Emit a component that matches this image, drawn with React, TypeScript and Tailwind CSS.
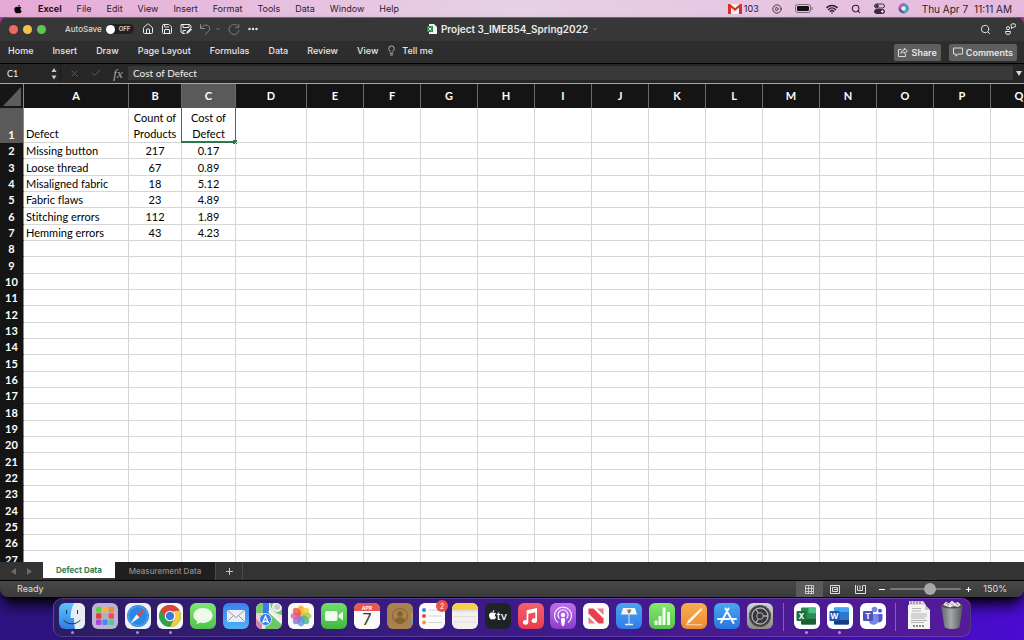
import type { ReactNode } from "react";
import {
  Check,
  ChevronDown,
  CirclePlay,
  Ellipsis,
  House,
  Lightbulb,
  Save,
  Search,
  Wifi,
  X,
} from "lucide-react";
import { FaApple } from "react-icons/fa";

const menus = ["File", "Edit", "View", "Insert", "Format", "Tools", "Data", "Window", "Help"];
const ribbonTabs = ["Home", "Insert", "Draw", "Page Layout", "Formulas", "Data", "Review", "View"];

const columns = [
  { name: "A", width: "w-[105px]" },
  { name: "B", width: "w-[53px]" },
  { name: "C", width: "w-[54px]" },
  { name: "D", width: "w-[71px]" },
  ..."EFGHIJKLMNOPQ".split("").map((name) => ({ name, width: "w-[57px]" })),
];

const data: Record<number, string[]> = {
  1: ["Defect", "Count of Products", "Cost of Defect"],
  2: ["Missing button", "217", "0.17"],
  3: ["Loose thread", "67", "0.89"],
  4: ["Misaligned fabric", "18", "5.12"],
  5: ["Fabric flaws", "23", "4.89"],
  6: ["Stitching errors", "112", "1.89"],
  7: ["Hemming errors", "43", "4.23"],
};

function MenuBar() {
  return (
    <header className="flex h-[17px] shrink-0 items-center justify-between bg-linear-to-r from-[#e6a9d6] via-[#e6d2e6] to-[#e6b9dc] pr-3 pl-[13px] text-[9px] leading-none text-[#2b1d2b]">
      <nav className="flex items-center gap-[15px]">
        <FaApple className="size-[10px] text-black" />
        <span className="font-bold text-[#1c101c]">Excel</span>
        {menus.map((m) => (
          <button key={m}>{m}</button>
        ))}
      </nav>
      <div className="flex items-center gap-[13px]">
        <span className="flex items-center gap-[2px]">
          <svg viewBox="0 0 14 11" className="h-[11px] w-[14px]">
            <path d="M0 1h14v10H0z" fill="#f4f0f4" />
            <path d="M0 1v10h3V4.5L7 8l4-3.5V11h3V1h-2L7 5.3 2 1z" fill="#d93025" />
          </svg>
          103
        </span>
        <CirclePlay className="size-[10px]" />
        <svg viewBox="0 0 18 9" className="h-[9px] w-[18px]">
          <rect x=".5" y=".5" width="15" height="8" rx="2" fill="none" stroke="#7a6878" />
          <rect x="2" y="2" width="12" height="5" rx="1" fill="#181018" />
          <path d="M17 3v3" stroke="#7a6878" />
        </svg>
        <Wifi className="size-[12px]" strokeWidth={3} />
        <Search className="size-[10px]" strokeWidth={2.5} />
        <svg viewBox="0 0 11 11" className="size-[11px]" fill="none" stroke="#3a2a3a">
          <rect x=".5" y="1" width="10" height="4" rx="2" />
          <circle cx="3" cy="3" r="1.3" fill="#3a2a3a" />
          <rect x=".5" y="6.5" width="10" height="4" rx="2" fill="#3a2a3a" />
          <circle cx="8.3" cy="8.5" r=".8" fill="#fff" stroke="#fff" />
        </svg>
        <svg viewBox="0 0 11 11" className="size-[11px]">
          <circle cx="5.5" cy="5.5" r="5" fill="#5a5a9a" />
          <path d="M5.5.5a5 5 0 0 1 5 5h-5z" fill="#3d9be0" />
          <path d="M.5 5.5a5 5 0 0 1 5-5v5z" fill="#c65a9c" />
          <path d="M5.5 10.5a5 5 0 0 0 5-5h-5z" fill="#37b6a8" />
          <circle cx="5.5" cy="5.5" r="2.2" fill="#e6effa" />
        </svg>
        <span className="flex gap-[6px] text-[10px]">
          <span>Thu Apr 7</span>
          <span>11:11 AM</span>
        </span>
      </div>
    </header>
  );
}

function TitleBar() {
  return (
    <div className="flex h-6 shrink-0 items-center border-t border-[#6a6a6a] bg-[#373737] pr-2 pb-px pl-[9px] text-[#ececec]">
      <div className="flex flex-1 items-center">
        <div className="flex gap-[5px]">
          <button aria-label="Close" className="size-[9px] rounded-full bg-[#ed6a5e]" />
          <button aria-label="Minimize" className="size-[9px] rounded-full bg-[#f5bf4f]" />
          <button aria-label="Zoom" className="size-[9px] rounded-full bg-[#61c554]" />
        </div>
        <label className="ml-[19px] flex items-center gap-1 text-[8px] leading-none font-medium text-[#d8d8d8]">
          AutoSave
          <span className="flex h-[10px] w-7 items-center gap-1 rounded-full bg-[#202020]">
            <input type="checkbox" className="size-[9px] appearance-none rounded-full bg-white" />
            <span className="text-[6px] font-semibold">OFF</span>
          </span>
        </label>
        <div className="ml-2 flex items-center gap-[7px]">
          <button aria-label="Home">
            <House className="size-3" />
          </button>
          <button aria-label="Save">
            <Save className="size-3" />
          </button>
          <button aria-label="Save a copy">
            <svg viewBox="0 0 12 12" className="size-3" fill="none" stroke="currentColor">
              <path d="M5 10.5H2.5L1 9V1.5h8.5L11 3v2M3 1.500v3h6v-3M3 10V7.5h3" />
              <path d="M6 11l1-2.500L10.5 5 12 6.500 8.5 10z" fill="currentColor" stroke="none" />
            </svg>
          </button>
          <button aria-label="Undo" className="flex items-center gap-1 text-[#8a8a8a]">
            <svg viewBox="0 0 12 12" className="size-3" fill="none" stroke="currentColor">
              <path d="M1.5 1v4.500H6M1.800 5.200C4 2 7.500 1.200 9.500 3.200s1.200 4-.8 5.800L6 11.500" />
            </svg>
            <ChevronDown className="size-[6px]" strokeWidth={3} />
          </button>
          <button aria-label="Redo" className="text-[#7a7a7a]">
            <svg viewBox="0 0 12 12" className="size-3" fill="none" stroke="currentColor">
              <path d="M10.800 1v3.500H7.300M10.500 4.200A5 5 0 1 0 11 7" />
            </svg>
          </button>
          <button aria-label="More">
            <Ellipsis className="size-3" strokeWidth={3} />
          </button>
        </div>
      </div>
      <h1 className="flex items-center gap-1 text-[10px] leading-none font-semibold">
        <svg viewBox="0 0 10 10" className="size-[10px]">
          <path d="M2 0h5l3 3v7H2z" fill="#f4f4f4" />
          <rect x="0" y="2" width="6" height="6" fill="#2a8a50" />
          <path d="M1.500 3.500l3 3M4.500 3.500l-3 3" stroke="#dff0e4" />
        </svg>
        Project 3_IME854_Spring2022
        <ChevronDown className="size-[6px] text-[#8a8a8a]" strokeWidth={3} />
      </h1>
      <div className="flex flex-1 items-center justify-end gap-[13px]">
        <button aria-label="Search">
          <Search className="size-[11px]" />
        </button>
        <button aria-label="Collaborate">
          <svg viewBox="0 0 12 12" className="size-3" fill="none" stroke="currentColor">
            <circle cx="4" cy="5.200" r="1.600" />
            <path d="M1.500 8.500h5v.8a2.500 2.200 0 0 1-5 0z" />
            <path d="M8.500.8h1.500a1.700 1.700 0 0 1 0 3.400H9.300L7.500 5.500V3.800A1.700 1.700 0 0 1 8.500.8z" />
          </svg>
        </button>
      </div>
    </div>
  );
}

function Ribbon() {
  return (
    <div className="flex h-[23px] shrink-0 items-center justify-between border-b border-black bg-[#2d2d2d] pr-[7px] pl-2 text-[9px] leading-none font-medium text-[#e6e6e6]">
      <nav className="flex items-center gap-[19px] pb-[3px]">
        {ribbonTabs.map((t) => (
          <button key={t}>{t}</button>
        ))}
        <button className="-ml-[11px] flex items-center gap-[5px]">
          <Lightbulb className="size-[11px] text-[#c4c4c4]" />
          Tell me
        </button>
      </nav>
      <div className="flex gap-2 font-semibold">
        <button className="flex h-[17px] items-center gap-1 rounded-[2px] bg-[#5e5e5e] px-1">
          <svg viewBox="0 0 10 10" className="size-[10px]" fill="none" stroke="currentColor" strokeWidth=".9">
            <path d="M3.500 2.500h-3v7h7V7" />
            <path d="M3 6.500C3.200 4 4.500 3 6.300 3V1.200L9.500 4 6.300 6.600V5C5 5 4 5.300 3 6.500z" />
          </svg>
          Share
        </button>
        <button className="flex h-[17px] items-center gap-[3px] rounded-[2px] bg-[#5e5e5e] px-1">
          <svg viewBox="0 0 10 10" className="size-[10px]" fill="none" stroke="currentColor" strokeWidth=".9">
            <path d="M.5 1h9v6H5L3 9.200V7H.5z" />
          </svg>
          Comments
        </button>
      </div>
    </div>
  );
}

function FormulaBar() {
  return (
    <div className="flex h-5 shrink-0 items-center border-b border-[#a8a8a8] bg-[#262626] pb-px font-['Lato',sans-serif] text-[10px] leading-none text-[#f0f0f0]">
      <input
        aria-label="Name box"
        defaultValue="C1"
        className="h-4 w-[51px] bg-transparent pl-[7px] text-[9px] outline-none"
      />
      <svg viewBox="0 0 6 13" className="h-[13px] w-[6px] shrink-0" fill="#c8c8c8">
        <path d="M3 1l2.500 4h-5zM3 12.500L.5 8.500h5z" />
      </svg>
      <div className="ml-[3px] flex h-full shrink-0 items-center border-l border-[#1a1a1a] text-[#5c5c5c]">
        <button aria-label="Cancel" className="ml-2">
          <X className="size-[11px]" />
        </button>
        <button aria-label="Enter" className="ml-[10px]">
          <Check className="size-[12px]" />
        </button>
        <button
          aria-label="Insert function"
          className="ml-[10px] w-[12px] font-['Liberation_Serif',serif] text-[13px] text-[#a8a8a8] italic"
        >
          fx
        </button>
      </div>
      <input
        aria-label="Formula"
        defaultValue="Cost of Defect"
        className="ml-1 h-[14px] min-w-0 flex-1 bg-[#383838] pl-[5px] outline-none"
      />
      <button aria-label="Expand formula bar" className="flex w-[11px] justify-center">
        <svg viewBox="0 0 6 5" className="h-[5px] w-[6px]" fill="#d8d8d8">
          <path d="M0 0h6L3 5z" />
        </svg>
      </button>
    </div>
  );
}

// Every third row takes the extra pixel of the 150% zoom.
function rowHeight(row: number) {
  if (row === 1) return "h-[35px]";
  return row % 3 === 0 ? "h-[17px]" : "h-[16px]";
}

function Sheet() {
  return (
    <main className="min-h-0 flex-1 overflow-hidden bg-white font-['Lato',sans-serif] text-[11px] leading-[16px] text-black [font-variant-ligatures:none]">
      <table className="w-[1047px] table-fixed border-separate border-spacing-0">
        <colgroup>
          <col className="w-6" />
          {columns.map((c) => (
            <col key={c.name} className={c.width} />
          ))}
        </colgroup>
        <thead>
          <tr className="h-6 text-white">
            <th className="border-r border-[#8a8a8a] bg-[#161616] p-0">
              <svg viewBox="0 0 23 24" className="block h-6 w-[23px]">
                <path d="M21 3v19H3z" fill="#5c5c5c" />
              </svg>
            </th>
            {columns.map((c) => (
              <th
                key={c.name}
                scope="col"
                className={`border-r border-[#6a6a6a] p-0 font-bold ${
                  c.name === "C" ? "bg-[#5a5a5a]" : "bg-[#141414]"
                }`}
              >
                {c.name}
              </th>
            ))}
          </tr>
        </thead>
        <tbody>
          {Array.from({ length: 27 }, (_, i) => i + 1).map((row) => (
            <tr key={row} className={rowHeight(row)}>
              <th
                scope="row"
                className={`border-r border-b border-r-[#8a8a8a] p-0 align-bottom leading-[15px] font-bold text-white ${
                  row === 1 ? "border-b-[#5a5a5a] bg-[#5a5a5a]" : "border-b-[#141414] bg-[#141414]"
                }`}
              >
                {row}
              </th>
              {columns.map((c, i) => (
                <td
                  key={c.name}
                  className={`relative border-r border-b border-[#d6d6d6] p-0 align-bottom ${
                    row === 1 ? "leading-[16px]" : "leading-[15px]"
                  } ${i === 0 ? "pl-[2px] text-left" : "text-center"}`}
                >
                  {data[row]?.[i]}
                  {row === 1 && c.name === "C" && (
                    <span className="absolute -inset-px border border-b-2 border-[#2b7a4b]">
                      <span className="absolute -right-[2px] -bottom-[3px] size-1 bg-[#2b7a4b]" />
                    </span>
                  )}
                </td>
              ))}
            </tr>
          ))}
        </tbody>
      </table>
    </main>
  );
}

function SheetTabs() {
  return (
    <div className="flex h-[19px] shrink-0 items-start border-b border-black bg-[#333] text-[8px] leading-none text-[#8f8f8f]">
      <div className="flex h-[18px] w-[43px] items-center justify-center gap-[11px]">
        <button aria-label="Previous sheet">
          <svg viewBox="0 0 5 7" className="h-[7px] w-[5px]" fill="#6a6a6a">
            <path d="M5 0v7L0 3.500z" />
          </svg>
        </button>
        <button aria-label="Next sheet">
          <svg viewBox="0 0 5 7" className="h-[7px] w-[5px]" fill="#6a6a6a">
            <path d="M0 0v7l5-3.500z" />
          </svg>
        </button>
      </div>
      <button className="h-4 w-[72px] bg-white font-bold text-[#2f7d4f]">Defect Data</button>
      <button className="h-[18px] w-[101px] border-r border-[#4a4a4a] bg-[#1f1f1f] font-medium">
        Measurement Data
      </button>
      <button
        aria-label="Add sheet"
        className="flex h-[18px] w-[27px] items-center justify-center border-r border-[#4a4a4a]"
      >
        <svg viewBox="0 0 7 7" className="size-[7px]" stroke="#c8c8c8">
          <path d="M3.500 0v7M0 3.500h7" />
        </svg>
      </button>
    </div>
  );
}

function StatusBar() {
  return (
    <footer className="flex h-4 shrink-0 items-center justify-between bg-linear-to-b from-[#484848] to-[#3a3a3a] px-[17px] text-[9px] leading-none text-[#dedede]">
      <span className="pb-px">Ready</span>
      <div className="flex h-full items-center">
        <button aria-label="Normal view" className="flex h-full w-[27px] items-center justify-center bg-[#5a5a5a]">
          <svg viewBox="0 0 9 9" className="size-[9px]" fill="none" stroke="currentColor">
            <path d="M.5.5h8v8h-8zM3.500.5v8M6.500.5v8M.5 3.500h8M.5 6.500h8" strokeWidth=".8" />
          </svg>
        </button>
        <button aria-label="Page layout view" className="flex w-6 items-center justify-center">
          <svg viewBox="0 0 10 9" className="h-[9px] w-[10px]" fill="none" stroke="currentColor">
            <path d="M.5.5h9v8h-9zM2.500 2.500h5v4h-5zM4 4.500h3" />
          </svg>
        </button>
        <button aria-label="Page break view" className="flex w-[27px] items-center justify-center">
          <svg viewBox="0 0 11 9" className="h-[9px] w-[11px]" fill="none" stroke="currentColor">
            <path d="M.5 0v8.500h10V.5H8M2.500.5v5h5V.5M5 .5v4" />
          </svg>
        </button>
        <button aria-label="Zoom out" className="ml-[5px]">
          <svg viewBox="0 0 6 6" className="size-[6px]" stroke="#fff">
            <path d="M0 3.500h6" />
          </svg>
        </button>
        <input
          type="range"
          aria-label="Zoom"
          min={0}
          max={100}
          defaultValue={57}
          className="mx-[5px] h-3 w-[71px] appearance-none bg-transparent [&::-webkit-slider-runnable-track]:h-[2px] [&::-webkit-slider-runnable-track]:rounded-full [&::-webkit-slider-runnable-track]:bg-[#7a7a7a] [&::-webkit-slider-thumb]:-mt-[5px] [&::-webkit-slider-thumb]:size-3 [&::-webkit-slider-thumb]:appearance-none [&::-webkit-slider-thumb]:rounded-full [&::-webkit-slider-thumb]:bg-[#a8a8a8]"
        />
        <button aria-label="Zoom in">
          <svg viewBox="0 0 5 5" className="size-[5px]" stroke="#fff">
            <path d="M2.500 0v5M0 2.500h5" />
          </svg>
        </button>
        <span className="ml-3 pb-px">150%</span>
      </div>
    </footer>
  );
}

type DockItem = { name: string; art: ReactNode; bg?: string; open?: boolean; badge?: string };

const petals = ["#f5a623", "#f7d038", "#a9cf46", "#55b08a", "#4f9fe0", "#8a78cf", "#d067a8", "#ee5a4a"];
const padColors = ["#5fd04a", "#f5b83a", "#f09030", "#e0403a", "#b0b0b8", "#f04a5a", "#a04ae0", "#4a8af0", "#50c8a0"];

const apps: DockItem[] = [
  {
    name: "Finder",
    open: true,
    bg: "bg-linear-to-b from-[#5ac4fa] to-[#2f7ee6]",
    art: (
      <>
        <path d="M15 0C12.500 5 11.500 10 11.500 15h3.500c0 4 .3 7.500 1 11h10V0z" fill="#e8ecf4" />
        <path d="M7.500 7.500v3M18.500 7.500v3M5 17.500c4.500 4.500 11.500 4.500 16 0" fill="none" stroke="#1c2c48" strokeLinecap="round" />
      </>
    ),
  },
  {
    name: "Launchpad",
    bg: "bg-[#bdb3cc]",
    art: padColors.map((c, i) => (
      <rect key={c} x={4 + (i % 3) * 6.3} y={4 + Math.floor(i / 3) * 6.3} width="5.400" height="5.400" rx="1.200" fill={c} />
    )),
  },
  {
    name: "Safari",
    open: true,
    bg: "bg-[#eef0f3]",
    art: (
      <>
        <circle cx="13" cy="13" r="11" fill="#2b86e4" />
        <circle cx="13" cy="13" r="9.500" fill="none" stroke="#8cc4f6" strokeWidth="1.500" strokeDasharray=".6 1.200" />
        <path d="M21 5L14.500 14.500l-3-3z" fill="#e8453c" />
        <path d="M5 21l6.500-9.500 3 3z" fill="#f2f5f8" />
      </>
    ),
  },
  {
    name: "Chrome",
    open: true,
    bg: "bg-[#f6f6f6]",
    art: (
      <>
        <circle cx="13" cy="13" r="11" fill="#2fa24f" />
        <path d="M3.500 7.500A11 11 0 0 1 22.500 7.500L13 8.500 9 15.500z" fill="#dc4437" />
        <path d="M22.600 7.800A11 11 0 0 1 13 24L17.500 15.500 16.500 8z" fill="#f7cb42" />
        <circle cx="13" cy="13" r="5.300" fill="#fff" />
        <circle cx="13" cy="13" r="4.200" fill="#3b78e0" />
      </>
    ),
  },
  {
    name: "Messages",
    bg: "bg-linear-to-b from-[#7fe875] to-[#4fc24a]",
    art: <path d="M13 5c5.500 0 9.500 3.300 9.500 7.600s-4 7.400-9.500 7.400c-1 0-2-.1-3-.4-1 .9-2.400 1.400-4 1.400.9-.8 1.300-1.600 1.300-2.600C5 17 3.500 15 3.500 12.600 3.500 8.300 7.500 5 13 5z" fill="#eefbec" />,
  },
  {
    name: "Mail",
    bg: "bg-linear-to-b from-[#3a80ee] to-[#52b0f4]",
    art: (
      <>
        <rect x="4" y="7" width="18" height="12" rx="1.500" fill="#eceef2" />
        <path d="M4.500 7.500l8.500 7 8.500-7M4.500 18.500l6-6M21.500 18.500l-6-6" fill="none" stroke="#8c949e" strokeWidth=".9" />
      </>
    ),
  },
  {
    name: "Maps",
    bg: "bg-[#e4ecdc]",
    art: (
      <>
        <path d="M14 0h12v12C20 11 15 7 14 0zM13 8l13 12v6H9z" fill="#6cc768" />
        <path d="M0 0h7v10H0z" fill="#78c874" />
        <path d="M0 10h5v16H0z" fill="#f0c8d4" />
        <path d="M0 16l6 5v5H0z" fill="#d880b0" />
        <path d="M7 0h6v14H7z" fill="#3b7ae8" />
        <path d="M13 8l13 12" stroke="#f2f4f0" strokeWidth="2.500" />
        <circle cx="21" cy="4" r="4" fill="#c8ccc8" stroke="#f2f2f2" strokeWidth="2" />
        <circle cx="9.500" cy="16.500" r="6" fill="#2f80ee" stroke="#d8e8fa" />
        <path d="M9.500 13l2.700 6.500-2.700-1.500-2.700 1.500z" fill="none" stroke="#fff" strokeWidth="1.200" />
      </>
    ),
  },
  {
    name: "Photos",
    bg: "bg-[#fafafa]",
    art: petals.map((c, i) => (
      <ellipse key={c} cx="13" cy="7.500" rx="3.600" ry="5" fill={c} opacity=".82" transform={`rotate(${i * 45} 13 13)`} />
    )),
  },
  {
    name: "FaceTime",
    bg: "bg-linear-to-b from-[#70e06a] to-[#40b840]",
    art: <path d="M6 8h8.500a2 2 0 0 1 2 2v6a2 2 0 0 1-2 2H6a2 2 0 0 1-2-2v-6a2 2 0 0 1 2-2zM17.500 12L22 8.500v9L17.500 14z" fill="#f0fcee" />,
  },
  {
    name: "Calendar",
    bg: "bg-[#fafafa]",
    art: (
      <>
        <path d="M0 0h26v8H0z" fill="#e8554e" />
        <text x="13" y="6.500" fontSize="5" fontWeight="700" fill="#fff" textAnchor="middle">APR</text>
        <text x="13" y="22" fontSize="16" fill="#333" textAnchor="middle">7</text>
      </>
    ),
  },
  {
    name: "Contacts",
    bg: "bg-[#a8824f]",
    art: (
      <>
        <path d="M24.500 4v6h1.500V4z" fill="#888" />
        <path d="M24.500 10v5h1.500v-5z" fill="#e89040" />
        <path d="M24.500 15v6h1.500v-6z" fill="#55a8d0" />
        <circle cx="13" cy="13" r="7.500" fill="none" stroke="#84632f" />
        <circle cx="13" cy="11" r="2.800" fill="#84632f" />
        <path d="M7.500 18c1-5 10-5 11 0a7.500 7.500 0 0 1-11 0z" fill="#84632f" />
      </>
    ),
  },
  {
    name: "Reminders",
    bg: "bg-[#fafafa]",
    badge: "2",
    art: (
      <>
        <path d="M9.500 7H23M9.500 13H23M9.500 19.500H23" stroke="#c9c9cc" strokeWidth=".8" />
        <circle cx="5" cy="7" r="2" fill="#3b82e8" />
        <circle cx="5" cy="13" r="2" fill="#e84a40" />
        <circle cx="5" cy="19.500" r="2" fill="#f09a38" />
      </>
    ),
  },
  {
    name: "Notes",
    bg: "bg-[#f3f1ee]",
    art: (
      <>
        <path d="M0 0h26v7H0z" fill="#f8cf48" />
        <path d="M0 8h26" stroke="#a8a49c" strokeWidth=".7" strokeDasharray="1 .8" />
        <path d="M2 13.500h22M2 19h22" stroke="#d8d5d0" strokeWidth=".7" />
      </>
    ),
  },
  {
    name: "TV",
    bg: "bg-[#1c2428]",
    art: (
      <>
        <path d="M9.500 9.800c-.9-.5-1.600 0-2 0s-1.100-.4-1.900-.1C4 10.200 3.600 12.300 4.500 14.500c1 2.200 1.700 2.200 2.500 1.800.6-.2.900-.2 1.500 0 1.100.5 2-.7 2.600-2.200-1.600-1-1.500-2.800 0-3.600-.4-.5-1-.7-1.600-.7zM7.500 9.300c0-1.200.8-2 1.800-2.200.1 1.200-.7 2.200-1.800 2.200z" fill="#fff" />
        <text x="17" y="16.500" fontSize="11" fontWeight="500" fill="#fff" textAnchor="middle">tv</text>
      </>
    ),
  },
  {
    name: "Music",
    bg: "bg-linear-to-b from-[#f4606e] to-[#e83a4c]",
    art: (
      <path d="M19 5v12.500a2.700 2.300 0 1 1-1.700-2V9.300l-7 1.500v8.400a2.700 2.300 0 1 1-1.700-2V7.300z" fill="#fff" />
    ),
  },
  {
    name: "Podcasts",
    bg: "bg-linear-to-b from-[#c070ec] to-[#8a3cc8]",
    art: (
      <>
        <path d="M8 19.500a8.500 8.500 0 1 1 10 0M9.500 15.500a5 5 0 1 1 7 0" fill="none" stroke="#f4e8fc" strokeWidth="1.300" />
        <circle cx="13" cy="12" r="2.200" fill="#fff" />
        <path d="M10.800 16c0-1.500 4.400-1.500 4.400 0l-.8 6c-.3 1.300-2.500 1.300-2.800 0z" fill="#fff" />
      </>
    ),
  },
  {
    name: "News",
    bg: "bg-[#fafafa]",
    art: (
      <>
        <path d="M5.500 5.500h5l10 10v5h-5l-10-10z" fill="#e8404e" />
        <path d="M14 5.500h6.500V12zM5.500 14v6.500H12z" fill="#f07a84" />
      </>
    ),
  },
  {
    name: "Keynote",
    bg: "bg-linear-to-b from-[#4aa4f2] to-[#2f7ee8]",
    art: (
      <>
        <path d="M7 5h12l2 6.500H5z" fill="#f4f6f8" />
        <circle cx="12" cy="7.500" r="1.300" fill="#e8a030" />
        <circle cx="14" cy="7.500" r="1.300" fill="#48a860" />
        <circle cx="13" cy="9" r="1.200" fill="#d8453c" />
        <path d="M12.500 11.500h1V21h-1z" fill="#e0e8f0" />
        <path d="M9 21.500h8" stroke="#e8eef4" strokeWidth="1.300" />
      </>
    ),
  },
  {
    name: "Numbers",
    bg: "bg-linear-to-b from-[#86e86e] to-[#52c44a]",
    art: <path d="M5.500 17.500h3V22h-3zM9.500 13h3v9h-3zM13.500 4.500h3V22h-3zM18 9h3v13h-3z" fill="#f2fcf0" />,
  },
  {
    name: "Pages",
    bg: "bg-linear-to-b from-[#f6ae4e] to-[#ee8a30]",
    art: (
      <>
        <path d="M20 5l1.500 1.500L9 19.500l-3.500 1.700L7 17.500z" fill="#f8f4ee" />
        <path d="M5 21.800h16" stroke="#fbe0bc" />
      </>
    ),
  },
  {
    name: "App Store",
    bg: "bg-linear-to-b from-[#48a8f0] to-[#2b74de]",
    art: (
      <path d="M14.500 5.500L7 19.500M11.500 5.500L15 12l4.500 8M4 16h11M18.500 16H22" fill="none" stroke="#f4faff" strokeWidth="2" strokeLinecap="round" />
    ),
  },
  {
    name: "System Preferences",
    bg: "bg-linear-to-b from-[#d0d6d8] to-[#8c8a84]",
    art: (
      <>
        <circle cx="13" cy="13" r="11" fill="#38383a" />
        <circle cx="13" cy="13" r="10.300" fill="none" stroke="#88888a" strokeWidth=".9" strokeDasharray=".8 .8" />
        <circle cx="13" cy="13" r="8" fill="none" stroke="#b0b0b2" strokeWidth="1.300" />
        <circle cx="13" cy="13" r="3.300" fill="none" stroke="#b0b0b2" />
        <path d="M16.300 13H21M11.300 10L8.800 6.200M11.300 16l-2.500 3.800" stroke="#b0b0b2" strokeWidth="1.300" />
      </>
    ),
  },
];

const office: DockItem[] = [
  {
    name: "Excel",
    open: true,
    bg: "bg-white",
    art: (
      <>
        <rect x="7" y="4.500" width="15" height="17" rx="1" fill="#2a8a50" />
        <path d="M14.500 4.500H21a1 1 0 0 1 1 1v4.800h-7.500z" fill="#4cc088" />
        <path d="M7 16h15v4.500a1 1 0 0 1-1 1H8a1 1 0 0 1-1-1z" fill="#1c5c36" />
        <rect x="2.500" y="8" width="10" height="10" rx="1" fill="#1b7040" />
        <text x="7.500" y="15.700" fontSize="8" fontWeight="700" fill="#fff" textAnchor="middle">X</text>
      </>
    ),
  },
  {
    name: "Word",
    open: true,
    bg: "bg-white",
    art: (
      <>
        <rect x="7" y="4.500" width="15" height="17" rx="1" fill="#2b78d0" />
        <path d="M7 5.500a1 1 0 0 1 1-1h13a1 1 0 0 1 1 1v3.500H7z" fill="#48a4ee" />
        <path d="M7 17h15v3.500a1 1 0 0 1-1 1H8a1 1 0 0 1-1-1z" fill="#183e80" />
        <rect x="2.500" y="8" width="10" height="10" rx="1" fill="#1c56b0" />
        <text x="7.500" y="15.700" fontSize="8" fontWeight="700" fill="#fff" textAnchor="middle">W</text>
      </>
    ),
  },
  {
    name: "Teams",
    bg: "bg-white",
    art: (
      <>
        <circle cx="14.500" cy="6.500" r="2.800" fill="#7b83eb" />
        <circle cx="20" cy="7.800" r="2" fill="#5059c9" />
        <path d="M16 11h6.500v5a3.500 3.500 0 0 1-5 3z" fill="#5059c9" />
        <path d="M9 11h9.500v6a5 5 0 0 1-9.500 2z" fill="#7b83eb" />
        <rect x="3" y="8" width="10" height="10" rx="1" fill="#4b53bc" />
        <text x="8" y="15.700" fontSize="8" fontWeight="700" fill="#fff" textAnchor="middle">T</text>
      </>
    ),
  },
];

function DockIcon({ item }: { item: DockItem }) {
  return (
    <button aria-label={item.name} className="relative flex flex-col items-center gap-[2px]">
      <span className={`block size-[26px] overflow-hidden rounded-[6px] ${item.bg}`}>
        <svg viewBox="0 0 26 26" className="block size-[26px]">
          {item.art}
        </svg>
      </span>
      <span className={`size-[3px] rounded-full ${item.open ? "bg-[#b48ae8]" : ""}`} />
      {item.badge && (
        <span className="absolute -top-[3px] -right-[3px] flex size-3 items-center justify-center rounded-full bg-[#ec5045] text-[7px] leading-none text-white">
          {item.badge}
        </span>
      )}
    </button>
  );
}

function Dock() {
  return (
    <div className="mx-auto mt-px mb-[3px] flex h-[39px] w-full max-w-[918px] shrink-0 items-start justify-between rounded-[9px] border border-white/15 bg-linear-to-r from-[#2c1c62] via-[#3c1a88] to-[#541a9a] px-[5px] pt-1">
      <div className="flex w-[714px] justify-between">
        {apps.map((a) => (
          <DockIcon key={a.name} item={a} />
        ))}
      </div>
      <div className="h-[28px] w-px bg-white/30" />
      <div className="flex w-[92px] justify-between">
        {office.map((a) => (
          <DockIcon key={a.name} item={a} />
        ))}
      </div>
      <div className="h-[28px] w-px bg-white/30" />
      <div className="flex gap-[7px]">
        <button aria-label="Documents">
          <svg viewBox="0 0 26 32" className="-mt-[3px] block h-8 w-[26px]">
            <path d="M3 1h14l3 4v10H3z" fill="#d8d8d8" />
            <path d="M5 1v3M8 1v3M11 1v3M14 1v3" stroke="#777" />
            <path d="M2 5h17l5 5v19H2z" fill="#f4f4f4" />
            <path d="M19 5v5h5z" fill="#c4c4c4" />
            <path d="M6 8.500h9M6 11h9M5 14h16M5 16h16M5 18h14M5 20.500h16M5 22.500h13" stroke="#a4a4a4" strokeWidth=".8" />
            <path d="M7 26h12" stroke="#888" strokeWidth="2" strokeDasharray="2 1" />
          </svg>
        </button>
        <button aria-label="Trash">
          <svg viewBox="0 0 26 32" className="-mt-[3px] block h-8 w-[26px]">
            <defs>
              <linearGradient id="bin" x1="0" x2="1">
                <stop offset="0" stopColor="#606468" />
                <stop offset=".45" stopColor="#a4a8aa" />
                <stop offset="1" stopColor="#505458" />
              </linearGradient>
            </defs>
            <path d="M2 5h22l-3.500 22c-1.500 2.500-13.500 2.500-15 0z" fill="url(#bin)" />
            <ellipse cx="13" cy="5.500" rx="11" ry="3" fill="#4a4a50" />
            <path d="M4 5l3-3.500 3 2 3-3 2.500 2.500L19 2l3 3-3 2-4-1-4 1.500L7 6z" fill="#e4e4e4" />
            <path d="M7 3l3 2M17 3l2 2.500" stroke="#c85a48" />
            <path d="M12 3.500l2 2" stroke="#4a88c8" />
          </svg>
        </button>
      </div>
    </div>
  );
}

export default function App() {
  return (
    <div className="flex h-screen flex-col overflow-hidden bg-linear-to-r from-[#2c1480] via-[#2a0c78] to-[#4a0cd0] font-['Inter',sans-serif]">
      <MenuBar />
      <div className="flex min-h-0 flex-1 bg-linear-to-b from-[#a03a98] from-5% to-transparent to-30%">
        <section className="flex min-w-0 flex-1 flex-col overflow-hidden rounded-lg shadow-lg shadow-black">
          <TitleBar />
          <Ribbon />
          <FormulaBar />
          <Sheet />
          <SheetTabs />
          <StatusBar />
        </section>
      </div>
      <Dock />
    </div>
  );
}
